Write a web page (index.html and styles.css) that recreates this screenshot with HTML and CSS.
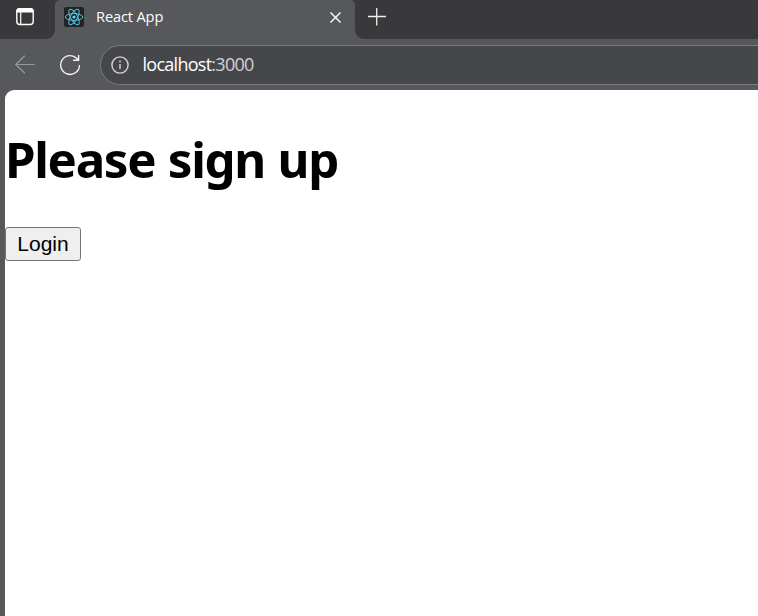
FILE: index.html
```
<!DOCTYPE html>
<html lang="en">
<head>
<meta charset="utf-8">
<title>React App</title>
<link rel="stylesheet" href="styles.css">
</head>
<body>
<div class="browser">
  <header class="tabstrip">
    <div class="tab-actions">
      <svg width="20" height="20" viewBox="0 0 20 20" fill="none" stroke="#fff">
        <rect x="1.8" y="1.8" width="16.4" height="15.7" rx="3" stroke-width="1.4"/>
        <path d="M1.5 5.5V4a3 3 0 0 1 3-3h11a3 3 0 0 1 3 3v1.5z" fill="#fff" stroke="none"/>
        <path d="M5.7 5v12.5" stroke-width="1.2"/>
      </svg>
    </div>
    <div class="tab-wrap">
      <div class="tab">
        <svg class="favicon" width="20" height="20" viewBox="0 0 20 20" fill="none" stroke="#53c1de" stroke-width="1">
          <rect width="20" height="20" rx="2" fill="#222325" stroke="none"/>
          <ellipse cx="10" cy="10" rx="8.7" ry="3.4"/>
          <ellipse cx="10" cy="10" rx="8.7" ry="3.4" transform="rotate(60 10 10)"/>
          <ellipse cx="10" cy="10" rx="8.7" ry="3.4" transform="rotate(120 10 10)"/>
          <circle cx="10" cy="10" r="1.6" fill="#61dafb" stroke="none"/>
        </svg>
        <span class="tab-title">React App</span>
        <svg class="close" width="12" height="12" viewBox="0 0 12 12" stroke="#fff" stroke-width="1.4"><path d="M1.5 1.5l10 10M11.5 1.5L1.5 11.5"/></svg>
      </div>
    </div>
    <div class="tab-rest">
      <svg width="18" height="18" viewBox="0 0 18 18" stroke="#eee" stroke-width="1.3"><path d="M0 8.5h18M8.7 0v17.5"/></svg>
    </div>
  </header>
  <div class="toolbar">
    <svg class="back" width="21" height="20" viewBox="0 0 21 20" fill="none" stroke="#98999c" stroke-width="1.2"><path d="M20.8 9.5H1.6M10.8 .7L1.7 9.5l9.1 8.8"/></svg>
    <svg class="reload" width="22" height="22" viewBox="0 0 22 22" fill="none" stroke="#f2f2f2" stroke-width="1.4"><path d="M20.5 11a9.4 9.4 0 1 1-2.6-6.5l1.6 1.7M19.6 1v5.3h-5.5"/></svg>
    <div class="address">
      <svg width="18" height="18" viewBox="0 0 18 18" fill="none" stroke="#d6d6d8" stroke-width="1.4"><circle cx="9" cy="9" r="8.1"/><path d="M9 8v5"/><circle cx="9" cy="5.5" r=".9" fill="#d6d6d8" stroke="none"/></svg>
      <span class="url">localhost<span class="port">:3000</span></span>
    </div>
  </div>
  <main class="page">
    <h1>Please sign up</h1>
    <button class="login" type="button">Login</button>
  </main>
</div>
</body>
</html>
```
FILE: styles.css
```
* { box-sizing: border-box; }
body { margin: 0; overflow: hidden; font-family: "Open Sans", "Noto Sans", sans-serif; }
svg { display: block; flex: none; }
.browser { height: 616px; background: #57585c; display: flex; flex-direction: column; overflow: hidden; }
.tabstrip { display: flex; height: 39px; flex: none; }
.tab-actions { width: 55px; background: #39393c; border-bottom-right-radius: 9px; padding: 7px 0 0 15px; }
.tab-wrap { width: 300px; background: linear-gradient(#39393c 8px, #57585c 8px); }
.tab { display: flex; align-items: center; height: 34px; padding: 0 14px 0 9px; background: #57585c; border-radius: 5px 5px 0 0; }
.tab-title { margin: -2px 0 0 12px; flex: 1; color: #fff; font-size: 14.6px; line-height: 20px; letter-spacing: -0.13px; }
.tab-rest { flex: 1; background: #39393c; border-bottom-left-radius: 9px; padding: 8px 0 0 13px; }
.toolbar { height: 51px; flex: none; display: flex; align-items: center; padding-left: 14px; }
.reload { margin-left: 24px; }
.address { margin-left: 19px; flex: 1; height: 40px; margin-right: -2px; border: 1px solid #7a7b7f; border-radius: 20px 0 0 20px; background: #46474a; display: flex; align-items: center; padding-left: 10px; }
.url { margin: -2px 0 0 13.5px; font-size: 18px; line-height: 24px; letter-spacing: -0.73px; color: #fff; }
.port { color: #d2d2d4; }
.page { flex: 1; margin-left: 5px; background: #fff; border-top-left-radius: 9px; }
h1 { margin: 35px 0 0; font-family: "Noto Sans", "Open Sans", sans-serif; font-size: 49.2px; line-height: 68px; letter-spacing: -1.3px; word-spacing: 1px; color: #000; white-space: nowrap; }
.login { display: block; margin: 34px 0 0; width: 76px; height: 34px; padding: 0; border: 1px solid #767676; border-radius: 3px; background: #efefef; color: #000; font: 21px/30px "Liberation Sans", Arial, sans-serif; }
```
